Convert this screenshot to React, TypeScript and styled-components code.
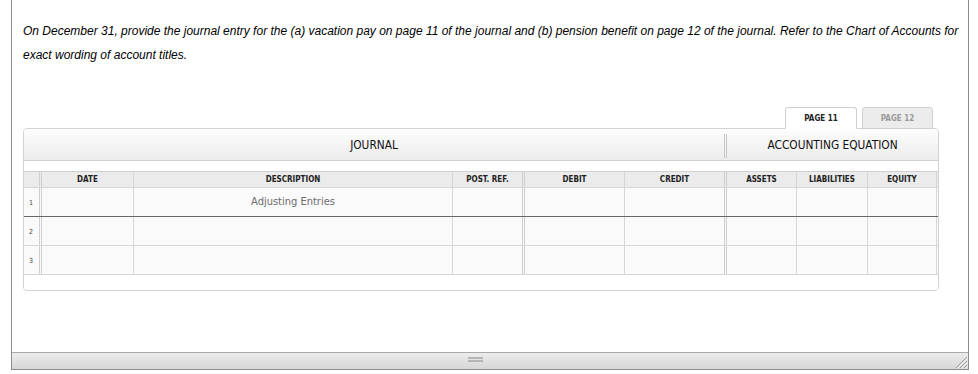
import React from "react";
import styled, { createGlobalStyle } from "styled-components";

const GlobalStyle = createGlobalStyle`
  html, body {
    margin: 0;
    padding: 0;
    background: #ffffff;
  }
`;

const COLS = "18px 92px 319px 72px 100px 102px 70px 71px 69px";

const columns = [
  { label: "", double: true },
  { label: "DATE" },
  { label: "DESCRIPTION" },
  { label: "POST. REF.", double: true },
  { label: "DEBIT" },
  { label: "CREDIT", double: true },
  { label: "ASSETS" },
  { label: "LIABILITIES" },
  { label: "EQUITY" },
];

const rows = [
  { n: 1, description: "Adjusting Entries", thick: true },
  { n: 2, description: "" },
  { n: 3, description: "" },
];

function App() {
  return (
    <>
      <GlobalStyle />
      <Page>
        <Frame>
          <Content>
            <Question>
              On December 31, provide the journal entry for the (a) vacation pay on page 11 of the
              journal and (b) pension benefit on page 12 of the journal. Refer to the Chart of
              Accounts for exact wording of account titles.
            </Question>

            <Tabs>
              <Tab active>PAGE 11</Tab>
              <Tab>PAGE 12</Tab>
            </Tabs>

            <Panel>
              <Band>
                <BandCell>JOURNAL</BandCell>
                <BandDivider />
                <BandCell>ACCOUNTING EQUATION</BandCell>
              </Band>
              <Spacer />
              <HeadRow>
                {columns.map((c, i) => (
                  <HeadCell key={i} double={c.double}>
                    {c.label}
                  </HeadCell>
                ))}
              </HeadRow>
              {rows.map((r) => (
                <Row key={r.n} thick={r.thick}>
                  {columns.map((c, i) => (
                    <Cell key={i} double={c.double}>
                      {i === 0 && <RowNum>{r.n}</RowNum>}
                      {i === 2 && r.description && <Entry>{r.description}</Entry>}
                    </Cell>
                  ))}
                </Row>
              ))}
              <PanelFoot />
            </Panel>
          </Content>

          <StatusBar>
            <Grip>
              <span />
              <span />
            </Grip>
            <Resize width="13" height="13" viewBox="0 0 13 13">
              <path d="M12 1 L1 12 M12 5 L5 12 M12 9 L9 12" stroke="#9a9a9a" strokeWidth="1" />
              <path d="M13 2 L2 13 M13 6 L6 13 M13 10 L10 13" stroke="#f4f4f4" strokeWidth="1" />
            </Resize>
          </StatusBar>
        </Frame>
      </Page>
    </>
  );
}

const Page = styled.div`
  padding-left: 11px;
  width: 958px;
`;

const Frame = styled.div`
  box-sizing: border-box;
  width: 958px;
  height: 370px;
  border-left: 1px solid #8c8c8c;
  border-right: 1px solid #8c8c8c;
  border-bottom: 1px solid #8c8c8c;
  display: flex;
  flex-direction: column;
`;

const Content = styled.div`
  flex: 1;
  padding: 19px 0 0 11px;
`;

const Question = styled.p`
  margin: 0;
  width: 940px;
  font-family: "Liberation Sans", Arial, sans-serif;
  font-style: italic;
  font-size: 12px;
  line-height: 24px;
  color: #000;
`;

const Tabs = styled.div`
  margin-top: 40px;
  width: 915px;
  display: flex;
  justify-content: flex-end;
  gap: 5px;
  padding-right: 5px;
  box-sizing: border-box;
`;

const Tab = styled.div<{ active?: boolean }>`
  box-sizing: border-box;
  width: ${(p) => (p.active ? "72px" : "71px")};
  height: 22px;
  margin-bottom: -1px;
  border: 1px solid #cfcfcf;
  border-bottom: ${(p) => (p.active ? "1px solid #ffffff" : "1px solid #cfcfcf")};
  border-radius: 3px 3px 0 0;
  background: ${(p) => (p.active ? "#ffffff" : "#ececec")};
  color: ${(p) => (p.active ? "#222" : "#9a9a9a")};
  font-family: "DejaVu Sans Condensed", "DejaVu Sans", sans-serif;
  font-weight: bold;
  font-size: 8px;
  display: flex;
  align-items: center;
  justify-content: center;
  position: relative;
  z-index: 1;
`;

const Panel = styled.div`
  box-sizing: border-box;
  width: 916px;
  border: 1px solid #d2d2d2;
  border-radius: 4px;
  overflow: hidden;
  font-family: "DejaVu Sans Condensed", "DejaVu Sans", sans-serif;
`;

const Band = styled.div`
  display: grid;
  grid-template-columns: 700px 3px 1fr;
  align-items: center;
  height: 31px;
  border-bottom: 1px solid #d0d0d0;
  background: linear-gradient(#fdfdfd, #ececec);
`;

const BandCell = styled.div`
  display: flex;
  align-items: center;
  justify-content: center;
  height: 100%;
  font-size: 11.8px;
  color: #111;
  padding-top: 1px;
  box-sizing: border-box;
`;

const BandDivider = styled.div`
  height: 24px;
  margin-top: 3px;
  box-sizing: border-box;
  border-left: 1px solid #c8c8c8;
  border-right: 1px solid #c8c8c8;
`;

const Spacer = styled.div`
  height: 10px;
  background: #ffffff;
`;

const HeadRow = styled.div`
  display: grid;
  grid-template-columns: ${COLS};
  height: 17px;
  box-sizing: border-box;
  border-top: 1px solid #d0d0d0;
  border-bottom: 1px solid #d6d6d6;
  background: #ebebeb;
`;

const HeadCell = styled.div<{ double?: boolean }>`
  box-sizing: border-box;
  border-right: ${(p) => (p.double ? "3px double #cfcfcf" : "1px solid #d6d6d6")};
  display: flex;
  align-items: center;
  justify-content: center;
  font-size: 8px;
  font-weight: bold;
  color: #222;
`;

const Row = styled.div<{ thick?: boolean }>`
  display: grid;
  grid-template-columns: ${COLS};
  height: 29px;
  box-sizing: border-box;
  border-bottom: ${(p) => (p.thick ? "1px solid #666" : "1px solid #d6d6d6")};
  background: #fafafa;
`;

const Cell = styled.div<{ double?: boolean }>`
  box-sizing: border-box;
  border-right: ${(p) => (p.double ? "3px double #cfcfcf" : "1px solid #d6d6d6")};
  display: flex;
  align-items: center;
  justify-content: center;
`;

const RowNum = styled.span`
  font-size: 7px;
  color: #444;
  width: 100%;
  padding-left: 5px;
  margin-top: 2px;
`;

const Entry = styled.span`
  font-size: 11px;
  color: #6c6c6c;
  margin-top: -2px;
`;

const PanelFoot = styled.div`
  height: 15px;
  background: #ffffff;
`;

const StatusBar = styled.div`
  box-sizing: border-box;
  height: 17px;
  border-top: 1px solid #a9a9a9;
  background: linear-gradient(#ececec, #d6d6d6);
  position: relative;
`;

const Grip = styled.div`
  position: absolute;
  left: 456px;
  top: 4px;
  width: 15px;
  display: flex;
  flex-direction: column;
  gap: 1px;

  span {
    display: block;
    height: 2px;
    background: #b5b5b5;
  }
`;

const Resize = styled.svg`
  position: absolute;
  right: 0;
  bottom: 0;
`;

export default App;
